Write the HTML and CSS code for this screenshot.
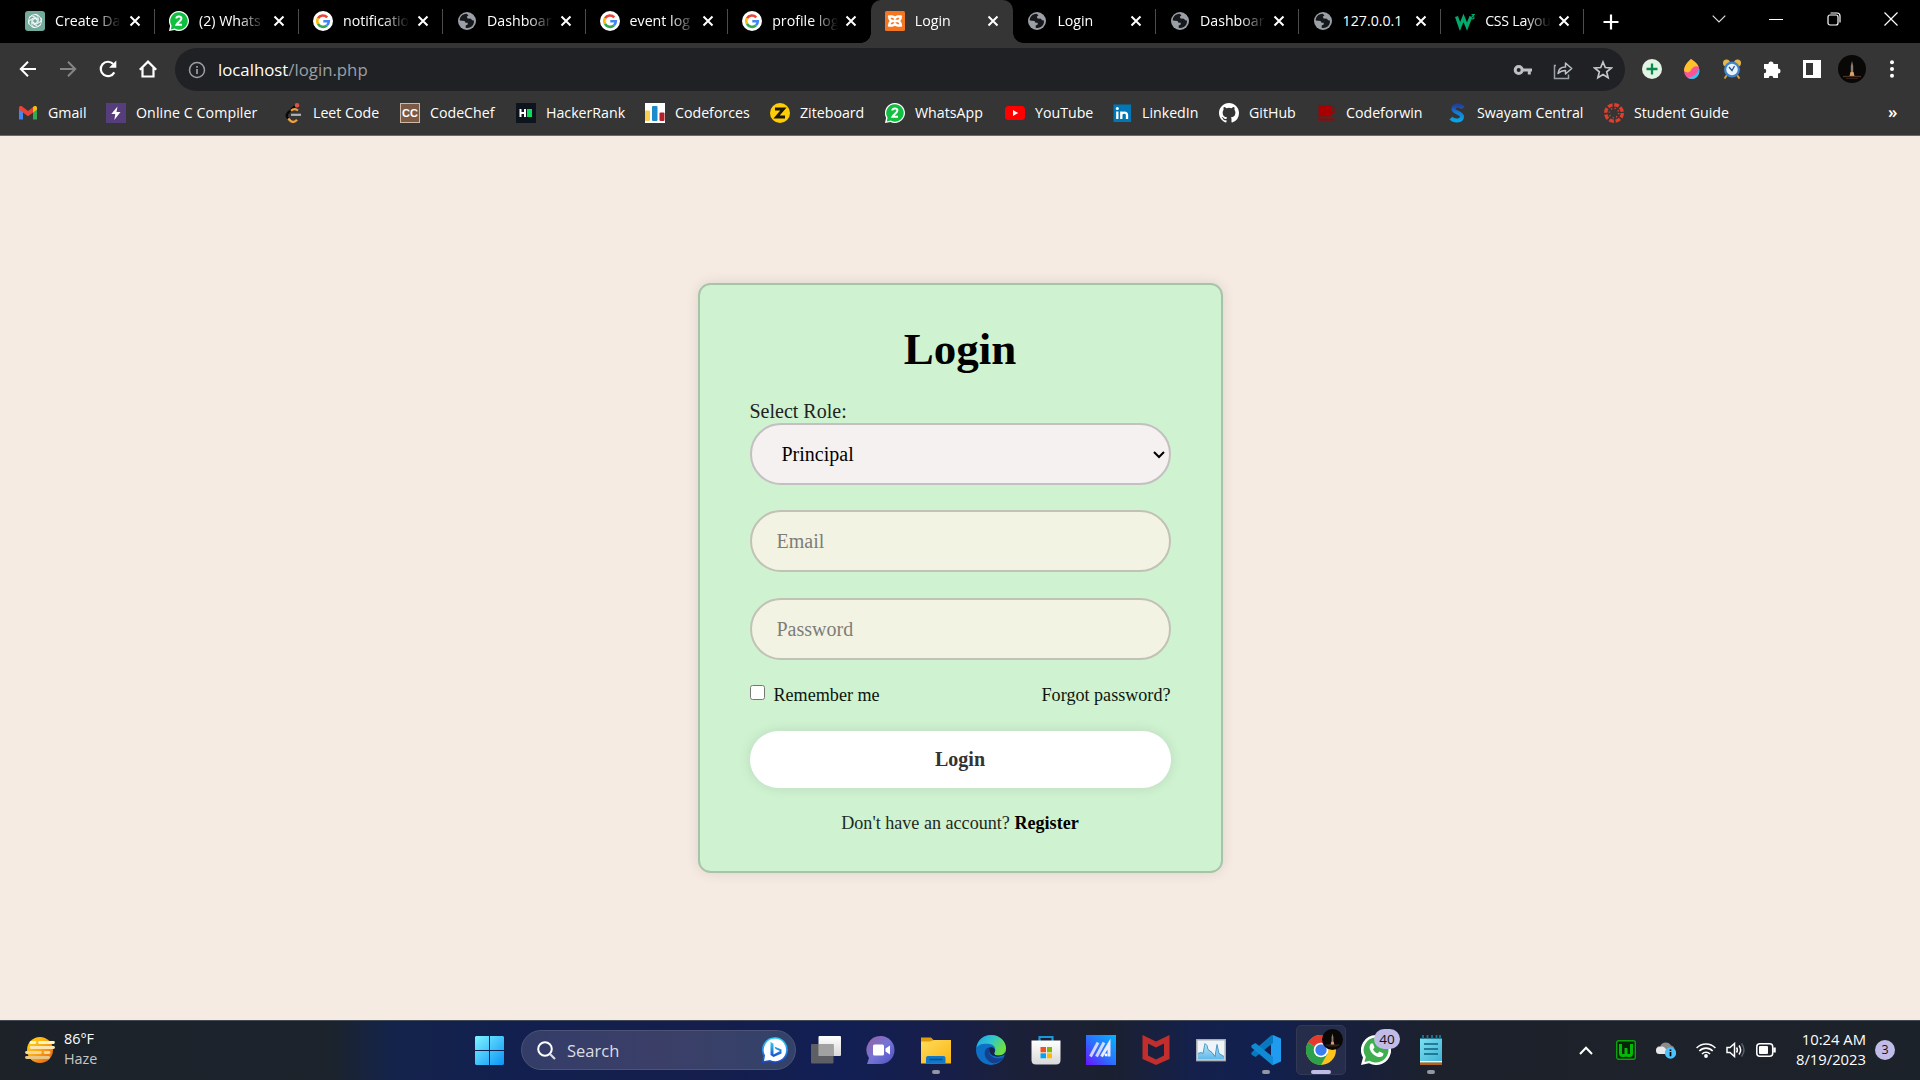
FILE: index.html
```html
<!DOCTYPE html>
<html lang="en">
<head>
<meta charset="utf-8">
<title>Login</title>
<link rel="stylesheet" href="styles.css">
</head>
<body>
<svg class="defs" width="0" height="0">
  <defs>
    <symbol id="google" viewBox="0 0 20 20"><circle cx="10" cy="10" r="10" fill="#fff"/><g fill="none" stroke-width="2.6"><path d="M14.2 6.3A5.8 5.8 0 0 0 5 7.2" stroke="#ea4335"/><path d="M5 7.2a5.8 5.8 0 0 0 0 5.6" stroke="#fbbc05"/><path d="M5 12.8a5.8 5.8 0 0 0 8.9 1.6" stroke="#34a853"/><path d="M13.9 14.4a5.8 5.8 0 0 0 1.9-4.2H10.3" stroke="#4285f4"/></g></symbol>
    <symbol id="globe" viewBox="0 0 20 20"><circle cx="10" cy="10" r="9" fill="#9aa0a6"/><path d="M9.500 2.800C5 3 2.700 6.300 2.800 9.500l4.700.5 1 1.800h2.200v1.700l-2 .9v2.400c2.500.8 5.300-.2 6.900-2.200 1.300-1.700 1.500-3.700 1.300-5.100l-1.700-.2-1.300-1.600-3.300-.3-.8-1.700 1.700-1.500z" fill="#17181b"/></symbol>
    <symbol id="wa2" viewBox="0 0 20 20"><path d="M10 0a10 10 0 1 1-4.600 18.900L0 20l1.100-5.300A10 10 0 0 1 10 0z" fill="#fff"/><path d="M10 1.300a8.700 8.700 0 1 1-4.400 16.200l-3.800.9.800-3.700A8.700 8.700 0 0 1 10 1.300z" fill="#10bf3f"/><path d="M7.300 7.500c.3-2.800 5.400-2.600 5.100.2-.2 2.100-3.600 3.500-4.900 6H13" fill="none" stroke="#fff" stroke-width="2"/></symbol>
    <symbol id="close" viewBox="0 0 12 12"><path d="M1.500 1.500l9 9m0-9l-9 9" stroke="#fff" stroke-width="2" fill="none"/></symbol>
    <symbol id="night" viewBox="0 0 28 28"><circle cx="14" cy="14" r="14" fill="#090807"/><path d="M14 6l1.200 5v8h-2.400v-8z" fill="#8a7d72"/><path d="M12.500 17h3l1 4h-5z" fill="#e0a06c"/><path d="M5 21.500h18" stroke="#4a3224" stroke-width="1.300"/><path d="M8 23.500h12" stroke="#302019"/></symbol>
    <linearGradient id="gWin" x1="0" y1="0" x2="1" y2="1"><stop offset="0" stop-color="#7df3ff"/><stop offset="1" stop-color="#0a94f7"/></linearGradient>
    <linearGradient id="gBing" x1="0" y1="0" x2="0" y2="1"><stop offset="0" stop-color="#2fd0f5"/><stop offset="1" stop-color="#174ad0"/></linearGradient>
    <linearGradient id="gWhite" x1="0" y1="0" x2="0" y2="1"><stop offset="0" stop-color="#fff"/><stop offset="1" stop-color="#d8d8d8"/></linearGradient>
    <linearGradient id="gChat" x1="0" y1="0" x2="1" y2="1"><stop offset="0" stop-color="#9a5f9e"/><stop offset=".5" stop-color="#7474d6"/><stop offset="1" stop-color="#4f4fc4"/></linearGradient>
    <linearGradient id="gFold" x1="0" y1="0" x2="1" y2="1"><stop offset="0" stop-color="#ffdc5c"/><stop offset="1" stop-color="#f9b513"/></linearGradient>
    <linearGradient id="gEdge" x1="0" y1="0" x2="1" y2=".5"><stop offset="0" stop-color="#1ea1e6"/><stop offset=".5" stop-color="#30c5cf"/><stop offset="1" stop-color="#6fe03d"/></linearGradient>
    <linearGradient id="gArm" x1="0" y1="1" x2="1" y2="0"><stop offset="0" stop-color="#6a14ff"/><stop offset=".45" stop-color="#2e6cff"/><stop offset="1" stop-color="#04b4ff"/></linearGradient>
    <linearGradient id="gGraph" x1="0" y1="0" x2="0" y2="1"><stop offset="0" stop-color="#bfe4f8"/><stop offset="1" stop-color="#5db9ea"/></linearGradient>
    <linearGradient id="gNote" x1="0" y1="0" x2="1" y2="1"><stop offset="0" stop-color="#7be0f2"/><stop offset="1" stop-color="#3fb0d4"/></linearGradient>
    <linearGradient id="gSun" x1="0" y1="0" x2="1" y2="1"><stop offset="0" stop-color="#ffdc10"/><stop offset=".5" stop-color="#fba316"/><stop offset="1" stop-color="#e8590f"/></linearGradient>
    <linearGradient id="gSway" x1="0" y1="0" x2="0" y2="1"><stop offset="0" stop-color="#23409c"/><stop offset=".45" stop-color="#1679d2"/><stop offset="1" stop-color="#08a4e4"/></linearGradient>
  </defs>
</svg>

<header class="browser">
  <div class="tabstrip">
    <div class="tab wide"><svg class="fav" viewBox="0 0 20 20"><rect width="20" height="20" rx="3" fill="#74aa9c"/><g fill="none" stroke="#fff" stroke-width=".9"><path id="petal" d="M10 3.300a3.200 3.200 0 0 1 3.200 3.200v4.200L10 12.500"/><use href="#petal" transform="rotate(60 10 10)"/><use href="#petal" transform="rotate(120 10 10)"/><use href="#petal" transform="rotate(180 10 10)"/><use href="#petal" transform="rotate(240 10 10)"/><use href="#petal" transform="rotate(300 10 10)"/><circle cx="10" cy="10" r="6.400"/></g></svg><span class="title">Create Da</span><svg class="x"><use href="#close"/></svg></div>
    <div class="tab wide"><svg class="fav"><use href="#wa2"/></svg><span class="title">(2) Whats</span><svg class="x"><use href="#close"/></svg></div>
    <div class="tab wide"><svg class="fav"><use href="#google"/></svg><span class="title">notificatio</span><svg class="x"><use href="#close"/></svg></div>
    <div class="tab"><svg class="fav"><use href="#globe"/></svg><span class="title">Dashboar</span><svg class="x"><use href="#close"/></svg></div>
    <div class="tab"><svg class="fav"><use href="#google"/></svg><span class="title">event log</span><svg class="x"><use href="#close"/></svg></div>
    <div class="tab nosep"><svg class="fav"><use href="#google"/></svg><span class="title">profile log</span><svg class="x"><use href="#close"/></svg></div>
    <div class="tab active"><svg class="fav" viewBox="0 0 20 20"><rect width="20" height="20" rx="1.500" fill="#f37623"/><path d="M4 5.500h3.200q2 0 2.800 2 .8-2 2.800-2H16M4 14.500h3.200q2 0 2.800-2 .8 2 2.800 2H16M4.300 5.500q-.3 2.800 2.200 4.500-2.500 1.700-2.200 4.500M15.700 5.500q.3 2.800-2.200 4.500 2.500 1.700 2.200 4.500M6.500 10h7" fill="none" stroke="#fff" stroke-width="2.400" stroke-linejoin="round" stroke-linecap="round"/></svg><span class="title">Login</span><svg class="x"><use href="#close"/></svg></div>
    <div class="tab late"><svg class="fav"><use href="#globe"/></svg><span class="title">Login</span><svg class="x"><use href="#close"/></svg></div>
    <div class="tab late"><svg class="fav"><use href="#globe"/></svg><span class="title">Dashboar</span><svg class="x"><use href="#close"/></svg></div>
    <div class="tab late"><svg class="fav"><use href="#globe"/></svg><span class="title plain">127.0.0.1</span><svg class="x"><use href="#close"/></svg></div>
    <div class="tab late"><svg class="fav" viewBox="0 0 20 20"><path d="M1.500 5.500l3.500 10 3.500-8.500 3.500 8.500 4-10" fill="none" stroke="#04aa6d" stroke-width="3.200"/><path d="M16.500 3.600h2.600l-1.500 1.800c2.400.2 1.800 3.300-1.200 2.300" fill="none" stroke="#04aa6d" stroke-width="1.100"/></svg><span class="title tight">CSS Layou</span><svg class="x"><use href="#close"/></svg></div>
    <svg class="newtab" viewBox="0 0 16 16"><path d="M8 .5v15M.5 8h15" stroke="#fff" stroke-width="2.200"/></svg>
    <div class="winctl">
      <svg width="14" height="8" viewBox="0 0 14 8"><path d="M.7.700L7 7 13.300.700" fill="none" stroke="#ddd" stroke-width="1.200"/></svg>
      <svg width="14" height="14" viewBox="0 0 14 14"><path d="M0 7.500h14" stroke="#fff"/></svg>
      <svg width="14" height="14" viewBox="0 0 14 14"><rect x="1" y="3" width="10" height="10" rx="2" fill="none" stroke="#fff" stroke-width="1.200"/><path d="M3.500 1h6.500a3 3 0 0 1 3 3v6.500" fill="none" stroke="#fff" stroke-width="1.200"/></svg>
      <svg width="14" height="14" viewBox="0 0 14 14"><path d="M.5.500l13 13m0-13l-13 13" stroke="#fff" stroke-width="1.200"/></svg>
    </div>
  </div>

  <div class="toolbar">
    <div class="nav">
      <svg viewBox="0 0 20 20"><path d="M18 10H3M10 2.800L2.800 10l7.200 7.200" fill="none" stroke="#fff" stroke-width="2"/></svg>
      <svg viewBox="0 0 20 20"><path d="M2 10h15M10 2.800l7.200 7.200-7.200 7.200" fill="none" stroke="#858585" stroke-width="2"/></svg>
      <svg viewBox="0 0 20 20"><path d="M16.300 13.400A7.200 7.200 0 1 1 15.200 5" fill="none" stroke="#fff" stroke-width="2.200"/><path d="M18.300 1.500v7.200h-7.200z" fill="#fff"/></svg>
      <svg viewBox="0 0 20 20"><path d="M1.800 10.800L10 2.600l8.200 8.200M4.500 8.500V17.500h11V8.500" fill="none" stroke="#fff" stroke-width="2.200"/></svg>
    </div>
    <div class="omnibox">
      <svg class="info" viewBox="0 0 18 18"><circle cx="9" cy="9" r="7.500" fill="none" stroke="#9aa0a6" stroke-width="1.500"/><path d="M9 8v5M9 5v1.700" stroke="#9aa0a6" stroke-width="1.700"/></svg>
      <span class="url">localhost<span class="path">/login.php</span></span>
      <span class="omniicons">
        <svg viewBox="0 0 20 20"><circle cx="5.700" cy="10" r="3.500" fill="none" stroke="#bdc1c6" stroke-width="3"/><path d="M9 10h10M16.300 10v4.500" stroke="#bdc1c6" stroke-width="3" fill="none"/></svg>
        <svg viewBox="0 0 20 20"><path d="M3 5.500H1.500v13h14v-4" fill="none" stroke="#9aa0a6" stroke-width="1.500"/><path d="M5 13.500c.5-4.500 3-6.500 7.500-6.500V3l6.200 5.500-6.200 5.500v-3.500C9 10.500 7 11.500 5 13.500z" fill="none" stroke="#bdc1c6" stroke-width="1.500" stroke-linejoin="round"/></svg>
        <svg viewBox="0 0 20 20"><path d="M10 2l2.300 5.500 6 .5-4.600 3.900 1.400 5.800-5.100-3.100-5.100 3.100 1.400-5.800L1.700 8l6-.5z" fill="none" stroke="#c4c7ca" stroke-width="1.700"/></svg>
      </span>
    </div>
    <div class="exts">
      <svg viewBox="0 0 20 20"><circle cx="10" cy="10" r="10" fill="#e4f4e4"/><path d="M10 4.500v11M4.500 10h11" stroke="#0b8a4e" stroke-width="2.300"/></svg>
      <svg viewBox="0 0 20 20"><path d="M9 0c5 3 9 7.500 8.300 12A7.600 7.600 0 0 1 10 20a8 8 0 0 1-8-8C2 7 5.500 3 9 0z" fill="#f8549a"/><path d="M9 0c4 2.500 6.500 5 7.700 8-3.700-2-6 .5-8 3.500-1.500 2.500-4 2.500-6.600.5C2 7 5.500 3 9 0z" fill="#ffc229"/><path d="M17 9.500c1.500 6-2.500 10.500-7 10.500-2 0-3.500-.5-5-1.700 6 .5 10-3 12-8.800z" fill="#31c5f5"/></svg>
      <svg viewBox="0 0 20 20"><path d="M5 16l-2.500 3.500M15 16l2.500 3.500" stroke="#d69b3d" stroke-width="2"/><circle cx="4.500" cy="4" r="3.500" fill="#e9b649"/><circle cx="15.500" cy="4" r="3.500" fill="#e9b649"/><circle cx="10" cy="10.500" r="8" fill="#3f83c9"/><circle cx="10" cy="10.500" r="5.700" fill="#e9f3fb"/><path d="M7 8l3 3.500L12.500 7" fill="none" stroke="#24548c" stroke-width="1.300"/></svg>
      <svg viewBox="0 0 20 20"><path d="M2 5h4.500a2.500 2.500 0 1 1 5 0H16v4.500a2.500 2.500 0 1 1 0 5V19h-4.700a2.300 2.300 0 1 0-4.600 0H2v-4.700a2.300 2.300 0 1 0 0-4.600z" fill="#fff"/></svg>
      <svg viewBox="0 0 20 20"><path d="M1 1h18v18H1zM4 4v12h7V4z" fill="#fff" fill-rule="evenodd"/></svg>
      <svg class="avatar"><use href="#night"/></svg>
      <svg viewBox="0 0 20 20"><g fill="#fff"><circle cx="10" cy="3.300" r="2"/><circle cx="10" cy="10" r="2"/><circle cx="10" cy="16.700" r="2"/></g></svg>
    </div>
  </div>

  <nav class="bookmarks">
    <a><svg viewBox="0 0 20 20"><path d="M1 4.500v12h4V9z" fill="#4285f4"/><path d="M19 4.500v12h-4V9z" fill="#34a853"/><path d="M1 4.500C1 3 3 2.500 4.200 3.400L10 8l5.800-4.600V9L10 13.300 5 9.500 1 6.500z" fill="#ea4335"/><path d="M15 4l.8-.6C17 2.500 19 3 19 4.500v2L15 9.500z" fill="#fbbc04"/></svg>Gmail</a>
    <a class="wider"><svg viewBox="0 0 20 20"><rect width="20" height="20" fill="#563d7c"/><path d="M11.500 3.500L5.300 11h4l-1 6 6.200-8h-4z" fill="#fff"/></svg>Online C Compiler</a>
    <a><svg viewBox="0 0 20 20"><path d="M13.500 1.500L4.800 10" stroke="#080808" stroke-width="2.300" fill="none"/><path d="M8 7.800c2-2 4.500-2.300 7-.3" stroke="#f0a13a" stroke-width="2.200" fill="none"/><path d="M5.500 9.300c-2.700 2.500-2 4.500-.2 6.400" stroke="#080808" stroke-width="2.400" fill="none"/><path d="M5.300 15.700l2 2c2 1.800 4.500 1.600 6.700-.9" stroke="#f0a13a" stroke-width="2.400" fill="none"/><path d="M8 11.800h10" stroke="#b3b3b3" stroke-width="2.200"/><circle cx="14" cy="2.300" r="2.300" fill="#d9534f"/></svg>Leet Code</a>
    <a><svg viewBox="0 0 20 20"><rect x=".5" y=".5" width="19" height="19" fill="#7b5b45" stroke="#cdb9a5"/><text x="10" y="14" text-anchor="middle" class="g-bold" font-size="11">CC</text></svg>CodeChef</a>
    <a><svg viewBox="0 0 20 20"><rect width="20" height="20" fill="#0e141e"/><path d="M4.500 6v8M9 6v8M4 10h5" stroke="#fff" stroke-width="2"/><path d="M11 6h5v8h-5z" fill="#05e05b"/></svg>HackerRank</a>
    <a><svg viewBox="0 0 20 20"><rect width="20" height="20" fill="#fff"/><rect y="7.500" width="5" height="10.500" rx="1" fill="#f8cd54"/><rect x="7" y="3" width="5.500" height="15" rx="1" fill="#1d8bc9"/><rect x="14.500" y="9.500" width="5" height="8.500" rx="1" fill="#b3202c"/></svg>Codeforces</a>
    <a><svg viewBox="0 0 20 20"><circle cx="10" cy="10" r="10" fill="#ffcd05"/><path d="M5 6h8.500L6.500 14H15" fill="none" stroke="#1b1809" stroke-width="2.800"/></svg>Ziteboard</a>
    <a><svg><use href="#wa2"/></svg>WhatsApp</a>
    <a><svg viewBox="0 0 20 20"><rect y="3" width="20" height="14" rx="3.500" fill="#f00"/><path d="M8 7v6l5.200-3z" fill="#fff"/></svg>YouTube</a>
    <a><svg viewBox="0 0 20 20"><rect x="1.500" y="1.500" width="17.500" height="17.500" fill="#0077b7"/><path d="M5.300 8.500V16M9.300 16V8.500M9.300 12c0-3.300 5.700-3.300 5.700 0v4" fill="none" stroke="#fff" stroke-width="2.300"/><circle cx="5.300" cy="5.500" r="1.500" fill="#fff"/></svg>LinkedIn</a>
    <a><svg viewBox="0 0 16 16"><path fill="#fff" d="M8 0C3.580 0 0 3.580 0 8c0 3.540 2.290 6.530 5.470 7.590.4.070.55-.17.55-.38 0-.19-.01-.82-.01-1.490-2.010.37-2.530-.49-2.690-.94-.09-.23-.48-.94-.82-1.130-.28-.15-.68-.52-.01-.53.63-.01 1.080.58 1.230.82.72 1.210 1.870.87 2.330.66.070-.52.280-.87.510-1.070-1.780-.2-3.640-.89-3.640-3.950 0-.87.310-1.590.82-2.150-.08-.2-.36-1.020.08-2.120 0 0 .67-.21 2.200.82a7.600 7.600 0 0 1 4 0c1.530-1.040 2.200-.82 2.200-.82.440 1.100.160 1.920.08 2.120.51.560.82 1.270.82 2.150 0 3.070-1.870 3.750-3.650 3.950.29.25.54.73.54 1.480 0 1.070-.01 1.930-.01 2.200 0 .21.150.46.550.38A8 8 0 0 0 16 8c0-4.420-3.580-8-8-8z"/></svg>GitHub</a>
    <a><svg viewBox="0 0 20 20"><path d="M3.500 3h11v9.500h-11zM1.500 16.500h17" fill="#a80000" stroke="#a80000" stroke-width="1.800"/><path d="M14 4.500h3.700v5l-3.700 1" fill="none" stroke="#a80000" stroke-width="1.600"/></svg>Codeforwin</a>
    <a><svg viewBox="0 0 20 20"><path d="M16 5C13.500 1 6.500 2 6.500 6s9 3.500 8.500 8c-.5 4.500-8 4.500-11 1" fill="none" stroke="url(#gSway)" stroke-width="4"/></svg>Swayam Central</a>
    <a><svg viewBox="0 0 20 20"><circle cx="10" cy="10" r="8.300" fill="none" stroke="#e13f2b" stroke-width="3.400" stroke-dasharray="4.800 1.720"/><circle cx="10" cy="10" r="4.700" fill="none" stroke="#e13f2b" stroke-width="1.500" stroke-dasharray="1.300 2.390"/></svg>Student Guide</a>
    <span class="more">»</span>
  </nav>
</header>

<main class="page">
  <form class="card">
    <h1>Login</h1>
    <label class="rolelabel" for="role">Select Role:</label>
    <select id="role" class="role"><option>Principal</option></select>
    <input class="field" type="text" placeholder="Email">
    <input class="field" type="password" placeholder="Password">
    <div class="remember">
      <label><input type="checkbox"><span>Remember me</span></label>
      <a>Forgot password?</a>
    </div>
    <button class="submit" type="button">Login</button>
    <p class="register">Don't have an account? <a>Register</a></p>
  </form>
</main>

<footer class="taskbar">
  <div class="weather">
    <svg width="30" height="28" viewBox="0 0 30 28"><circle cx="15" cy="14" r="13" fill="url(#gSun)"/><g stroke-linecap="round" stroke-width="2.800"><path d="M6 6.500h4M14.500 6.500h14" stroke="#fff3c4"/><path d="M6 11.500h22.500" stroke="#fbe6b0"/><path d="M1.500 16.500h14M20 16.500h4" stroke="#f4d79a"/><path d="M1.500 21.500h22" stroke="#eac684"/></g></svg>
    <div class="wtext"><span>86°F</span><span class="dim">Haze</span></div>
  </div>
  <svg class="start" viewBox="0 0 29 29"><path d="M1 0h13v14H0V1zM15 0h13l1 1v13H15zM0 15h14v14H1l-1-1zM15 15h14v13l-1 1H15z" fill="url(#gWin)"/></svg>
  <div class="search">
    <svg width="19" height="19" viewBox="0 0 19 19"><circle cx="8" cy="8" r="6.800" fill="none" stroke="#fff" stroke-width="2"/><path d="M13 13l5 5" stroke="#ddd" stroke-width="2.200"/></svg>
    <span>Search</span>
    <svg class="bing" width="26" height="26" viewBox="0 0 26 26"><path d="M13 1a12 12 0 1 1-5 22.900L1 25l1.200-6.500A12 12 0 0 1 13 1z" fill="#fff" stroke="url(#gBing)" stroke-width="1.700"/><path d="M8.500 5l3 1.500v11L18 14l-4.500-2-1-2.500 7 3v4L11.500 20l-3-2z" fill="url(#gBing)"/></svg>
  </div>
  <div class="apps">
    <div class="app"><svg viewBox="0 0 30 30"><rect x="7.500" y="1" width="22.500" height="20" rx="1" fill="url(#gWhite)"/><rect y="9" width="22.500" height="19.500" rx="1" fill="#666" fill-opacity=".9"/><path d="M7.500 9h15v12h-15z" fill="#a2a2a2"/></svg></div>
    <div class="app"><svg viewBox="0 0 30 30"><path d="M15 1a14 14 0 1 1-1 28H1l2-6A14 14 0 0 1 15 1z" fill="url(#gChat)"/><rect x="7" y="9.500" width="11" height="11" rx="1.500" fill="#fff"/><path d="M19.500 13.500l4.500-3v9l-4.500-3z" fill="#fff"/></svg></div>
    <div class="app run"><svg viewBox="0 0 30 30"><path d="M0 2.500h10l3 3-3 4H0z" fill="#e09c09"/><path d="M0 6.500h9l4-1.500h17v23.500H0z" fill="url(#gFold)"/><path d="M5 28.500V23q0-2 2-2h15.500q2 0 2 2v5.500z" fill="#0f78c9"/><path d="M8.500 24.500h13" stroke="#0c4b86" stroke-width="1.500"/></svg></div>
    <div class="app"><svg viewBox="0 0 30 30"><circle cx="15" cy="15" r="15" fill="#0d6fc6"/><path d="M.3 13C1.500 5 7.500 0 15 0c9 0 15 6.500 15 13 0 5-3.500 7.500-7.500 7.500-3.500 0-5-1.500-4-3 2-2.500.5-7.500-4-8.300C8 8 2 9.500.3 13z" fill="url(#gEdge)"/><path d="M10 14c-4 6 1.500 13.500 8 14.500 4-.5 8-3 10-6.500-9 4-15.500-2-15-5.500.1-2 1-3 1.500-3.800-1.500-.6-3.400 0-4.500 1.300z" fill="#14418f"/><path d="M14.500 12c-2 2-2 6 2 8.500 3.500 1.800 8 1.500 12.200-1l-1.200 3.500L30 20v-3c-2 2.500-4.500 3.500-7.500 3.500-3.500 0-5-1.500-4-3 1-1.500 1-5-4-5.500z" fill="#172349"/></svg></div>
    <div class="app"><svg viewBox="0 0 30 30"><path d="M8.500 7V2h13v5" fill="none" stroke="#1997d8" stroke-width="2.200"/><path d="M.5 5.500h29V25q0 4.500-4.500 4.500H5Q.5 29.500.5 25z" fill="url(#gWhite)"/><path d="M9.500 12H15v5.300H9.500z" fill="#f25022"/><path d="M16 12h5v5.300h-5z" fill="#7fba00"/><path d="M9.500 18.300H15v5H9.500z" fill="#00a4ef"/><path d="M16 18.300h5v5h-5z" fill="#ffb900"/></svg></div>
    <div class="app"><svg viewBox="0 0 30 30"><path d="M0 0h30v30H0z" fill="url(#gArm)"/><g fill="none" stroke="#eceaff" stroke-width="3"><path d="M4.500 21.500l7.500-14" stroke-opacity=".85"/><path d="M10.500 21.500l7.500-14" stroke-opacity=".85"/><path d="M15.500 21.500l7.500-12.500v12.500"/></g><circle cx="20" cy="20" r="1.400" fill="#fff"/></svg></div>
    <div class="app"><svg viewBox="0 0 30 30"><path d="M1.500 0L15 6.500 28.500 0v24L15 30 1.500 24zM7 8.500v12l8 4 8-4v-12l-8 4z" fill="#c12e2c" fill-rule="evenodd"/></svg></div>
    <div class="app"><svg viewBox="0 0 30 30"><rect x=".8" y="4.800" width="28.400" height="20.800" fill="#eef4f8" stroke="#aab1b9" stroke-width="1.500"/><path d="M2 24.500v-6l3-1 2 1 2-10 2 2 1 4 4 3 3 4 2-12 2 9 5 3v3z" fill="url(#gGraph)"/><path d="M2 18.500l3-1 2 1 2-10 2 2 1 4 4 3 3 4 2-12 2 9 5 3" fill="none" stroke="#2d84ba" stroke-width=".8"/></svg></div>
    <div class="app run"><svg viewBox="0 0 30 30"><path d="M22 0l8 3.500v23L22 30l-2-1V7z" fill="#1f9cf0"/><path d="M22 8L4.500 22 1 20q-1.500-1.500 0-3L20 .5 22 0z" fill="#0879be"/><path d="M22 22L4.500 8 1 10q-1.500 1.500 0 3l19 16 2 1z" fill="#118ad6"/></svg></div>
    <div class="app current"><svg viewBox="0 0 30 30"><circle cx="15" cy="15" r="15" fill="#fcc31e"/><path d="M15 15L2 7.500A15 15 0 0 1 28 7.500z" fill="#e33b2e"/><path d="M2 7.500A15 15 0 0 0 15 30l6.500-11.200L15 15z" fill="#2ba14b"/><circle cx="15" cy="15" r="7.300" fill="#fff"/><circle cx="15" cy="15" r="5.700" fill="#3a7df0"/></svg><svg class="profile" viewBox="0 0 28 28"><use href="#night"/></svg></div>
    <div class="app"><svg viewBox="0 0 30 30"><path d="M15 0a15 15 0 1 1-7 28.200L0 30l2-7.500A15 15 0 0 1 15 0z" fill="#fff"/><path d="M15 2.500a12.500 12.500 0 1 1-6.500 23.200l-5 1.200 1.300-4.900A12.500 12.500 0 0 1 15 2.500z" fill="#3fae4f"/><path d="M10 8.500l2 0 1.500 4-1.500 2c1 2 2.500 3.300 4.500 4l2-2 4 2c0 4-4.500 4.500-8.500 2s-7.500-8-4-12z" fill="#fff"/></svg><span class="count">40</span></div>
    <div class="app run"><svg viewBox="0 0 30 30"><path d="M4 3.500h22v25H4z" fill="url(#gNote)"/><path d="M4 26h22v1.500H4z" fill="#fff"/><path d="M4 27.500h22V30H4z" fill="#b5601c"/><path d="M7 0v4M11.500 0v4M16 0v4M20.500 0v4M24 0v4" stroke="#147b99" stroke-width="1.800"/><path d="M8 9h14M8 14h14M8 19h14" stroke="#0d627c" stroke-width="1.700"/></svg></div>
  </div>
  <div class="tray">
    <svg class="chev" width="14" height="9" viewBox="0 0 14 9"><path d="M1 8l6-6.300L13 8" fill="none" stroke="#fff" stroke-width="2"/></svg>
    <svg class="wicon" width="20" height="20" viewBox="0 0 20 20"><rect x=".7" y=".7" width="18.600" height="18.600" rx="2" fill="#062506" stroke="#08a508" stroke-width="1.400"/><path d="M4.500 4v9.500q0 2 2 2h1.500q2 0 2-2V8v5.500q0 2 2 2h1.500q2 0 2-2V4" fill="none" stroke="#06b806" stroke-width="3"/></svg>
    <svg class="cloud" width="20" height="18" viewBox="0 0 20 18"><path d="M4 13a4 4 0 0 1 .3-8A6 6 0 0 1 15 4.500 4.500 4.500 0 0 1 16 13z" fill="#8c8c8c"/><path d="M3.500 13a3.500 3.500 0 0 1 0-7C7 4.500 10 6 12 13z" fill="#e9e9e9"/><circle cx="14.500" cy="12" r="5.700" fill="#4cc2ff"/><path d="M14.500 11v4.200M14.500 8.500v1.600" stroke="#000" stroke-width="1.700"/></svg>
    <svg class="wifi" width="20" height="15" viewBox="0 0 20 15"><g fill="none" stroke="#fff" stroke-width="1.600"><path d="M.6 5a13 13 0 0 1 18.800 0M3.300 8a9.300 9.300 0 0 1 13.400 0M6 11a5.500 5.500 0 0 1 8 0"/></g><circle cx="10" cy="13" r="1.900" fill="#fff"/></svg>
    <svg class="vol" width="20" height="16" viewBox="0 0 20 16"><g fill="none" stroke="#fff" stroke-width="1.500"><path d="M1 5.500v5h3l4.500 4V1.500L4 5.500z"/><path d="M10.500 5.500q1.800 2.500 0 5M13 3.500q3.300 4.500 0 9"/><path d="M15.500 1.500q5 6.500 0 13" stroke="#59606a"/></g></svg>
    <svg class="bat" width="20" height="14" viewBox="0 0 20 14"><rect x=".8" y=".8" width="15.900" height="12.400" rx="3" fill="none" stroke="#fff" stroke-width="1.500"/><rect x="3" y="3" width="9" height="8" rx="1" fill="#fff"/><path d="M18.500 4.500v5" stroke="#fff" stroke-width="2.500"/></svg>
    <div class="clock"><span>10:24 AM</span><span>8/19/2023</span></div>
    <span class="notif">3</span>
  </div>
</footer>
</body>
</html>
```
FILE: styles.css
```css
* { box-sizing: border-box; }

body {
  margin: 0;
  width: 1920px;
  height: 1080px;
  overflow: hidden;
  display: flex;
  flex-direction: column;
  background: #f5ebe2;
  font-family: "Liberation Serif", "Times New Roman", serif;
}

svg { display: block; flex: none; }
.defs { position: absolute; }

/* ---------- browser chrome ---------- */
.browser {
  flex: none;
  height: 136px;
  background: #353535;
  border-bottom: 1px solid #6d6965;
  color: #fff;
  font: 14.2px "Open Sans", "Noto Sans", sans-serif;
}

.tabstrip {
  height: 43px;
  padding-left: 11px;
  display: flex;
  align-items: center;
  background: #000;
}
.tab {
  position: relative;
  flex: none;
  width: 142.6px;
  height: 43px;
  padding: 0 13px 1px 14px;
  display: flex;
  align-items: center;
}
.tab.wide { width: 144px; }
.tab.late { width: 142.600px; }
.tab::after {
  content: "";
  position: absolute;
  right: 0;
  top: 9px;
  width: 1px;
  height: 25px;
  background: #4d4d4d;
}
.tab.active::after, .tab.nosep::after { display: none; }
.tab.active { z-index: 1; background: #353535; border-radius: 10px 10px 0 0; }
.tab.active::before {
  content: "";
  position: absolute;
  left: -10px;
  right: -10px;
  bottom: 0;
  height: 10px;
  background:
    radial-gradient(circle at 0 0, transparent 9.5px, #353535 10px) left / 10px 10px no-repeat,
    radial-gradient(circle at 100% 0, transparent 9.5px, #353535 10px) right / 10px 10px no-repeat;
}
.fav { width: 20px; height: 20px; }
.title {
  width: 66px;
  margin-left: 10px;
  flex: none;
  overflow: hidden;
  white-space: nowrap;
  line-height: 22px;
  -webkit-mask-image: linear-gradient(90deg, #000 40px, transparent 66px);
  mask-image: linear-gradient(90deg, #000 40px, transparent 66px);
}
.title.plain { -webkit-mask-image: none; mask-image: none; }
.title.tight { letter-spacing: -.25px; }
.x { width: 12px; height: 12px; margin-left: auto; margin-right: 1px; }
.newtab { width: 16px; height: 16px; margin-left: 19px; }
.winctl {
  margin-left: auto;
  height: 38px;
  margin-bottom: 5px;
  padding-right: 22px;
  display: flex;
  align-items: center;
  gap: 43.400px;
}

.toolbar { height: 53px; padding-bottom: 1px; display: flex; align-items: center; }
.nav { width: 175px; padding: 0 17px 0 18px; display: flex; justify-content: space-between; }
.nav svg { width: 20px; height: 20px; }
.omnibox {
  width: 1450px;
  height: 43px;
  padding: 1px 12px 0 13px;
  border-radius: 22px;
  background: #202124;
  display: flex;
  align-items: center;
}
.info { width: 18px; height: 18px; }
.url { margin-left: 12px; font-size: 16.8px; line-height: 24px; }
.path { color: #9aa0a6; }
.omniicons { margin-left: auto; display: flex; gap: 20px; }
.omniicons svg { width: 20px; height: 20px; }
.exts { flex: 1; padding-left: 17px; display: flex; align-items: center; gap: 20px; }
.exts svg { width: 20px; height: 20px; }
.exts .avatar { width: 28px; height: 28px; margin: 0 -4px; }

.bookmarks {
  height: 34px;
  padding-left: 18px;
  display: grid;
  grid-template-columns: 88px 177px 117px 116px 129px 125px 115px 120px 107px 107px 97px 131px 157px 280px auto;
  align-items: center;
}
.bookmarks a { display: flex; align-items: center; gap: 10px; white-space: nowrap; line-height: 20px; }
.bookmarks .wider { letter-spacing: .08px; }
.bookmarks svg { width: 20px; height: 20px; }
.g-bold { font-family: "Liberation Sans", sans-serif; font-weight: 700; fill: #fff; }
.more { font-size: 17px; font-weight: 600; line-height: 20px; padding: 0 0 3px 4px; }

/* ---------- login page ---------- */
.page { flex: 1; display: flex; justify-content: center; align-items: flex-start; padding-top: 147px; }
.card {
  width: 525px;
  height: 590px;
  padding: 35px 50px 0;
  background: #cff2d1;
  border: 2px solid #a7c4a9;
  border-radius: 12.5px;
  box-shadow: 0 0 12.5px rgba(0, 0, 0, .1);
  display: flex;
  flex-direction: column;
}
h1 { margin: 3px 0 0; font-size: 45px; line-height: 52px; text-align: center; color: #000; }
.rolelabel { margin-top: 25px; font-size: 20px; line-height: 23px; color: #222; }
.field, .role {
  flex: none;
  outline: none;
  font-family: "Liberation Serif", "Times New Roman", serif;
}
.field {
  width: 421px;
  height: 62px;
  margin: 25.500px 0 0;
  padding: 1px 25px 0;
  border: 2px solid #c2c1b6;
  border-radius: 50px;
  background: #f3f3e4;
  color: #222;
  font-size: 20px;
}
/* scaled up so that the native arrow grows with the text */
.role {
  zoom: 1.25;
  width: 336.800px;
  height: 49.600px;
  margin: 0;
  padding: 0 1px 0 20px;
  border: 1.600px solid #c4bfc0;
  border-radius: 40px;
  background: #f6f1f1;
  color: #000;
  font-size: 16px;
}
.role + .field { margin-top: 25px; }
.field::placeholder { color: #7d7d78; }
.remember { margin-top: 23px; height: 24px; display: flex; justify-content: space-between; font-size: 18.125px; line-height: 25px; color: #0c160d; }
.remember label { display: flex; }
.remember input { width: 15px; height: 15px; margin: 2px 9px 0 0; }
.submit {
  flex: none;
  height: 57px;
  margin: 24px 0 0;
  border: 0;
  border-radius: 50px;
  background: #fff;
  box-shadow: 0 0 12.5px rgba(0, 0, 0, .1);
  color: #333;
  font: 700 20px "Liberation Serif", "Times New Roman", serif;
}
.register { margin: 23px 0 0; text-align: center; font-size: 18.125px; line-height: 24px; color: #1e2a1f; }
.register a { font-weight: 700; color: #000; }

/* ---------- taskbar ---------- */
.taskbar {
  flex: none;
  height: 60px;
  display: flex;
  align-items: center;
  border-top: 1px solid #414a55;
  padding-bottom: 1px;
  background: linear-gradient(90deg, #1d2229 0, #1c232c 330px, #14234a 390px, #12204f 500px, #151e4c 700px, #121f54 840px, #171e48 950px, #1b203a 1010px, #1b2030 1110px, #15204b 1190px, #11204f 1260px, #171f3c 1350px, #1d212b 1440px, #1c222a 1920px);
  color: #fff;
  font: 15px "Open Sans", "Noto Sans", sans-serif;
}
.weather { width: 475px; padding-left: 25px; display: flex; align-items: center; gap: 9px; font-size: 14.4px; }
.wtext, .clock { display: flex; flex-direction: column; line-height: 20px; padding-bottom: 2px; }
.dim { color: #c4c6c9; }
.start { width: 29px; height: 29px; }
.search {
  flex: none;
  width: 275px;
  height: 40px;
  margin-left: 17px;
  padding: 0 7px 0 15px;
  border: 1px solid #4c5374;
  border-radius: 20px;
  background: linear-gradient(90deg, #333d68, #3b3f68 50%, #33426a);
  display: flex;
  align-items: center;
  gap: 11px;
  font-size: 16.5px;
  color: #dcdde3;
}
.bing { margin-left: auto; }
.apps { display: flex; align-items: center; margin-left: 5px; gap: 5px; }
.app { position: relative; width: 50px; height: 50px; display: flex; align-items: center; justify-content: center; border-radius: 5px; }
.app svg { width: 30px; height: 30px; }
.app.current { background: #252d4b; border: 1px solid #323955; }
.app.run::after, .app.current::after {
  content: "";
  position: absolute;
  left: 21px;
  bottom: 1px;
  width: 8px;
  height: 4px;
  border-radius: 2px;
  background: #9397a5;
}
.app.current::after { left: 14px; bottom: 0; width: 20px; background: #c1bbe8; }
.app .profile { position: absolute; left: 25px; top: 3px; width: 21px; height: 21px; }
.count {
  position: absolute;
  left: 23px;
  top: 4px;
  width: 26px;
  height: 20px;
  border-radius: 10px;
  background: #c1bbe8;
  color: #111;
  font-size: 13.500px;
  line-height: 20px;
  text-align: center;
}
.tray { margin-left: auto; display: flex; align-items: center; padding-right: 25px; font-size: 14.8px; }
.wicon { margin-left: 23px; }
.cloud { margin-left: 20px; }
.wifi { margin-left: 20px; }
.vol { margin-left: 10px; }
.bat { margin-left: 10px; }
.clock { width: 80px; margin-left: 10px; text-align: right; white-space: nowrap; align-items: flex-end; }
.notif {
  width: 20px;
  height: 20px;
  margin-left: 9px;
  border-radius: 50%;
  background: #c1bbe8;
  color: #111;
  font-size: 12.500px;
  line-height: 20px;
  text-align: center;
}
```
